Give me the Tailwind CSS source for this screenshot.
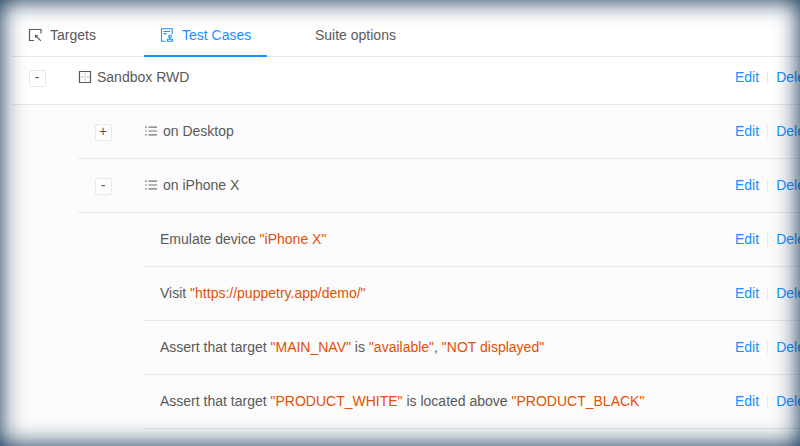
<!DOCTYPE html>
<html lang="en">
<head>
<meta charset="utf-8">
<title>Test Cases</title>
<script src="https://cdn.jsdelivr.net/npm/@tailwindcss/browser@4"></script>
</head>
<body class="w-[800px] h-[446px] overflow-hidden bg-white font-['Liberation_Sans',Arial,sans-serif] text-[14px] leading-[21px] text-[#595959]">
<div class="relative w-[800px] h-[446px] overflow-hidden flex flex-col pl-3">
  <nav class="flex h-[57px] shrink-0 border-b border-[#e8e8e8]">
    <div class="flex px-4 pt-[25px] mr-8 h-[57px] w-[100px]">
      <svg class="w-[14px] h-[14px] mt-[3px] mr-2 shrink-0" viewBox="0 0 14 14" fill="none" stroke="currentColor" stroke-width="1.2"><path d="M13 5.5V1.5H1.5V12.5H6M12.8 12.8L8 8"/><path d="M6.8 6.8L10.2 7.2L7.2 10.2Z" fill="currentColor" stroke="none"/></svg>
      <span>Targets</span>
    </div>
    <div class="flex px-4 pt-[25px] mr-8 h-[57px] w-[123px] text-[#1890ff] border-b-2 border-[#1890ff]">
      <svg class="w-[14px] h-[14px] mt-[3px] mr-2 shrink-0" viewBox="0 0 14 14" fill="none" stroke="currentColor" stroke-width="1.1"><path d="M5.8 13.2H1.5V.7H12.2V6.2M3.5 3.5H10M3.5 5.6H6.6"/><circle cx="10" cy="8.3" r="1.3"/><path d="M10 9.6V11M7.5 11.2H12.6V13.2H7.5Z"/></svg>
      <span class="whitespace-nowrap">Test Cases</span>
    </div>
    <div class="px-4 pt-[25px]"><span>Suite options</span></div>
  </nav>

  <div class="flex h-12 shrink-0 border-b border-[#e8e8e8] pt-[10px]">
    <div class="w-[66px] shrink-0 pl-[17px] pt-[3px]"><div class="w-[17px] h-[17px] border border-[#e8e8e8] rounded-[2px] bg-white text-center leading-[13px] pr-px">-</div></div>
    <svg class="w-[14px] h-[14px] mt-[3px] mr-[5px] shrink-0" viewBox="0 0 14 14" fill="none" stroke="currentColor"><path d="M1.5 1.5H12.5V12.5H1.5Z" stroke-width="1.2"/><path d="M6.4 4H7.6M6.4 7H7.6M6.4 10H7.6M3.4 7H4.6M9.4 7H10.6" stroke-width="1.2" opacity=".75"/></svg>
    <span class="w-[638px] shrink-0">Sandbox RWD</span>
    <div class="flex text-[#1890ff] shrink-0"><span>Edit</span><i class="w-px h-[13px] bg-[#e8e8e8] mx-2 mt-1"></i><span>Delete</span></div>
  </div>

  <main class="flex flex-col h-[341px] shrink-0 bg-[#fbfbfb] pl-[66px]">
    <div class="flex h-[54px] shrink-0 border-b border-[#e8e8e8] pt-4">
      <div class="w-[66px] shrink-0 pl-[17px] pt-[3px]"><div class="w-[17px] h-[17px] border border-[#e8e8e8] rounded-[2px] bg-white text-center leading-[13px] pr-px">+</div></div>
      <svg class="w-[14px] h-[14px] mt-[3px] mr-[5px] shrink-0" viewBox="0 0 14 14" fill="none" stroke="currentColor" stroke-width="1.2"><path d="M4.5 3.2H13M4.5 7H13M4.5 10.8H13M1.2 3.2H2.8M1.2 7H2.8M1.2 10.8H2.8" opacity=".85"/></svg>
      <span class="w-[572px] shrink-0">on Desktop</span>
      <div class="flex text-[#1890ff] shrink-0"><span>Edit</span><i class="w-px h-[13px] bg-[#e8e8e8] mx-2 mt-1"></i><span>Delete</span></div>
    </div>
    <div class="flex h-[54px] shrink-0 border-b border-[#e8e8e8] pt-4">
      <div class="w-[66px] shrink-0 pl-[17px] pt-[3px]"><div class="w-[17px] h-[17px] border border-[#e8e8e8] rounded-[2px] bg-white text-center leading-[13px] pr-px">-</div></div>
      <svg class="w-[14px] h-[14px] mt-[3px] mr-[5px] shrink-0" viewBox="0 0 14 14" fill="none" stroke="currentColor" stroke-width="1.2"><path d="M4.5 3.2H13M4.5 7H13M4.5 10.8H13M1.2 3.2H2.8M1.2 7H2.8M1.2 10.8H2.8" opacity=".85"/></svg>
      <span class="w-[572px] shrink-0">on iPhone X</span>
      <div class="flex text-[#1890ff] shrink-0"><span>Edit</span><i class="w-px h-[13px] bg-[#e8e8e8] mx-2 mt-1"></i><span>Delete</span></div>
    </div>
    <div class="flex flex-col ml-[66px]">
      <div class="flex h-[54px] border-b border-[#e8e8e8] pt-4 pl-4">
        <div class="w-[575px] shrink-0">Emulate device <span class="text-[#e05206]">"iPhone X"</span></div>
        <div class="flex text-[#1890ff]"><span>Edit</span><i class="w-px h-[13px] bg-[#e8e8e8] mx-2 mt-1 shrink-0"></i><span>Delete</span></div>
      </div>
      <div class="flex h-[54px] border-b border-[#e8e8e8] pt-4 pl-4">
        <div class="w-[575px] shrink-0">Visit <span class="text-[#e05206]">"https://puppetry.app/demo/"</span></div>
        <div class="flex text-[#1890ff]"><span>Edit</span><i class="w-px h-[13px] bg-[#e8e8e8] mx-2 mt-1 shrink-0"></i><span>Delete</span></div>
      </div>
      <div class="flex h-[54px] border-b border-[#e8e8e8] pt-4 pl-4">
        <div class="w-[575px] shrink-0">Assert that target <span class="text-[#e05206]">"MAIN_NAV"</span> is <span class="text-[#e05206]">"available"</span>, <span class="text-[#e05206]">"NOT displayed"</span></div>
        <div class="flex text-[#1890ff]"><span>Edit</span><i class="w-px h-[13px] bg-[#e8e8e8] mx-2 mt-1 shrink-0"></i><span>Delete</span></div>
      </div>
      <div class="flex h-[54px] border-b border-[#e8e8e8] pt-4 pl-4">
        <div class="w-[575px] shrink-0">Assert that target <span class="text-[#e05206]">"PRODUCT_WHITE"</span> is located above <span class="text-[#e05206]">"PRODUCT_BLACK"</span></div>
        <div class="flex text-[#1890ff]"><span>Edit</span><i class="w-px h-[13px] bg-[#e8e8e8] mx-2 mt-1 shrink-0"></i><span>Delete</span></div>
      </div>
    </div>
  </main>
  <div class="absolute inset-0 pointer-events-none shadow-[inset_0_0_24px_#002548]"></div>
</div>
</body>
</html>
